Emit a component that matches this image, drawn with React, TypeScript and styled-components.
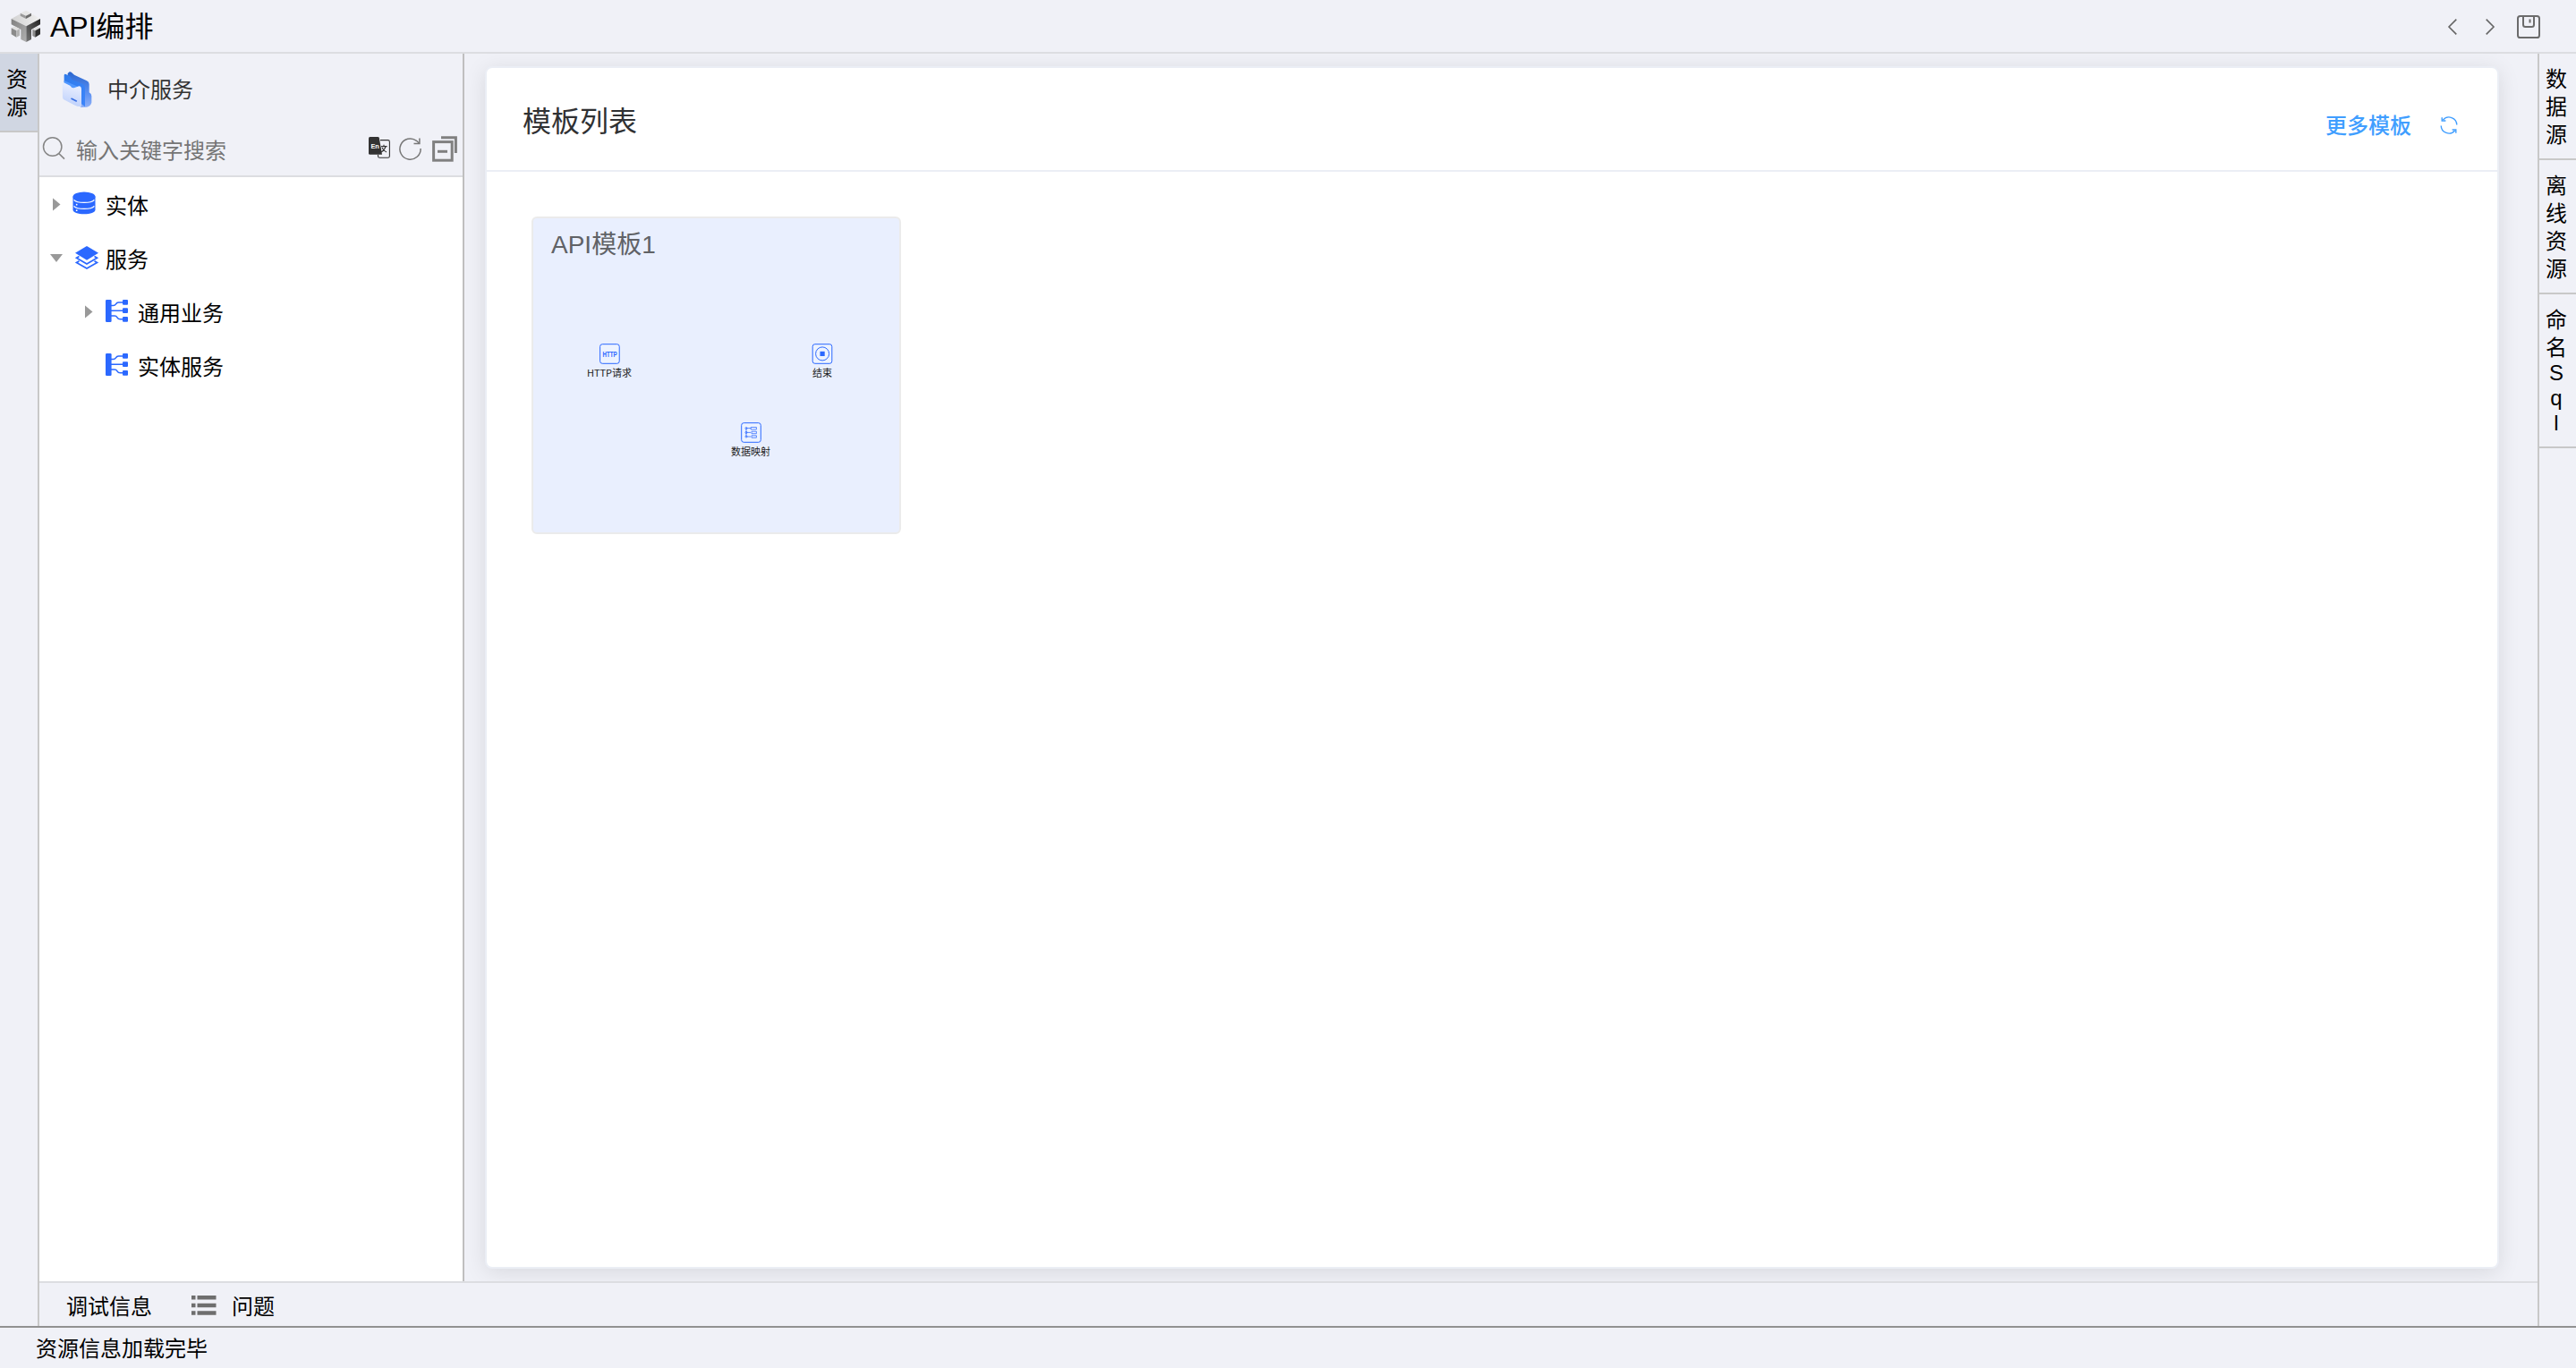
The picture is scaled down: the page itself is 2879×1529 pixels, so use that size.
import type { ReactNode } from "react";
import styled, { createGlobalStyle } from "styled-components";

interface TreeItem {
    label: string;
    level: number;
    state: "closed" | "open" | "leaf";
    icon: ReactNode;
    iconOffset: number;
}

interface FlowNode {
    label: string;
    x: number;
    y: number;
    icon: ReactNode;
}

const LogoIcon = () => (
    <svg width="34" height="37" viewBox="0 0 102 111">
        <defs>
            <linearGradient id="logoTop" x1="0" y1="0" x2="1" y2="0">
                <stop offset="0" stopColor="#d2d2d2" />
                <stop offset="1" stopColor="#f0f0f0" />
            </linearGradient>
            <linearGradient id="logoLeft" x1="0" y1="0" x2="1" y2="1">
                <stop offset="0" stopColor="#808080" />
                <stop offset="1" stopColor="#b0b0b0" />
            </linearGradient>
            <linearGradient id="logoRight" x1="1" y1="0" x2="0" y2="1">
                <stop offset="0" stopColor="#222" />
                <stop offset="1" stopColor="#777" />
            </linearGradient>
        </defs>
        <path d="M5 30 32 15 54 28 77 15 102 30 55 55Z" fill="url(#logoTop)" />
        <path d="M35 11 54 2 72 11 54 20Z" fill="#e6e6e6" />
        <path d="M35 11 54 20V30L35 20Z" fill="#999" />
        <path d="M54 20 72 11V20L54 30Z" fill="#6c6c6c" />
        <path d="M5 30 55 55V108L37 99V66L5 49Z" fill="url(#logoLeft)" />
        <path d="M102 30 55 55V108L72 99V66L102 49Z" fill="url(#logoRight)" />
        <path d="M5 61 16 55 33 64 22 70Z" fill="#e0e0e0" />
        <path d="M5 61 22 70V92L5 82Z" fill="#8b8b8b" />
        <path d="M22 70 33 64V86L22 92Z" fill="#b4b4b4" />
        <path d="M76 65 92 56 102 61 85 70Z" fill="#dedede" />
        <path d="M76 65 85 70V92L76 87Z" fill="#8c8c8c" />
        <path d="M85 70 102 61V82L85 92Z" fill="#2e2e2e" />
    </svg>
);

const FolderIcon = () => (
    <svg width="34" height="40" viewBox="0 0 102 120">
        <defs>
            <linearGradient id="folderBack" x1="0" y1="0" x2="1" y2="1">
                <stop offset="0" stopColor="#2f7bea" />
                <stop offset="1" stopColor="#3c85fb" />
            </linearGradient>
            <linearGradient id="folderSide" x1="0" y1="0" x2="0" y2="1">
                <stop offset="0" stopColor="#2a66cf" />
                <stop offset="0.6" stopColor="#5b90f2" />
                <stop offset="1" stopColor="#8fb0f6" />
            </linearGradient>
            <linearGradient id="folderFront" x1="0.6" y1="0" x2="0.4" y2="1">
                <stop offset="0" stopColor="#eef2ff" />
                <stop offset="1" stopColor="#bccffb" />
            </linearGradient>
        </defs>
        <path d="M20 6 26 1Q30 0 33 3L42 11 84 31Q92 34 92 42V70Q100 74 100 82V104Q97 116 84 119L64 120 20 60Z" fill="url(#folderSide)" />
        <path d="M8 12Q9 7 14 9L28 16 34 27 66 40Q78 44 78 55V118L8 60Z" fill="url(#folderBack)" />
        <path d="M8 30 64 55V70L8 46Z" fill="#4f97ff" />
        <path d="M2 42Q3 35 10 38L28 47Q34 56 41 55L58 49Q66 50 66 60V118Q50 118 40 111L7 94Q3 91 3 86Z" fill="url(#folderFront)" />
        <path d="M33 91 49 99" stroke="#376fe4" strokeWidth="5" strokeLinecap="round" />
    </svg>
);

const SearchIcon = () => (
    <svg width="26" height="26" viewBox="0 0 26 26" fill="none" stroke="#858585" strokeWidth="1.5">
        <circle cx="11.7" cy="11" r="10.2" />
        <path d="M18.6 18.4 25 24.6" />
    </svg>
);

const TranslateIcon = () => (
    <svg width="24" height="24" viewBox="0 0 24 24">
        <path d="M13 3.6H21.5Q23.4 3.6 23.4 5.5V21.5Q23.4 23.3 21.5 23.3H12.5Q10.5 23.3 10.5 21.5V20" fill="none" stroke="#333" strokeWidth="1.1" />
        <path d="M1.5 0H10.4Q11.4 0 11.8 1L15 19.8H1.5Q0 19.8 0 18.3V1.5Q0 0 1.5 0Z" fill="#333" />
        <text x="2.4" y="13" fontSize="7.4" fontWeight="700" fill="#fff">En</text>
        <path d="M14 10.6H20.6M17 8.8V10.6M19 10.8Q18 14.5 14 17M15 12Q16.5 15.5 20 17" fill="none" stroke="#333" strokeWidth="1.1" />
    </svg>
);

const ReloadIcon = () => (
    <svg width="25" height="25" viewBox="0 0 25 25" fill="none" stroke="#777" strokeWidth="1.5">
        <path d="M24.1 12A11.6 11.6 0 1 1 19.5 3.3L22.6 6.2" />
        <path d="M22.9 0.6V6.6H16.5" />
    </svg>
);

const CollapseIcon = () => (
    <svg width="28" height="29" viewBox="0 0 28 29" fill="none" stroke="#808080">
        <path d="M10 1.7H26.4V19" strokeWidth="3" />
        <rect x="1.6" y="6.6" width="20.6" height="20.6" strokeWidth="3" />
        <path d="M6 17.3H17" strokeWidth="3" />
    </svg>
);

const DatabaseIcon = () => (
    <svg width="26" height="26" viewBox="0 0 26 26">
        <path d="M.5 5.5V20.5C.5 23.4 6 25.3 13 25.3S25.5 23.4 25.5 20.5V5.5Z" fill="#2b68ff" />
        <ellipse cx="13" cy="6" rx="12.5" ry="5.6" fill="#2b68ff" />
        <path d="M1.6 9.3C5 13.4 21 13.4 24.4 9.3M1.6 16.3C5 20.4 21 20.4 24.4 16.3" fill="none" stroke="#fff" strokeWidth="1.3" />
        <circle cx="4.7" cy="14.7" r="0.9" fill="#fff" />
        <circle cx="4.7" cy="21.2" r="0.9" fill="#fff" />
    </svg>
);

const LayersIcon = () => (
    <svg width="26" height="28" viewBox="0 -2 26 28" fill="none" stroke="#2b68ff" strokeWidth="1.7">
        <path d="M13 0 26 7.8 13 15.8 0 7.8Z" fill="#2b68ff" stroke="none" />
        <path d="M4.5 11.5 1.5 13.2 13 20 24.5 13.2 21.5 11.5M4.5 16.7 1.5 18.4 13 25 24.5 18.4 21.5 16.7" />
    </svg>
);

const BranchIcon = () => (
    <svg width="25" height="25" viewBox="0 0 25 25" fill="#2b68ff">
        <rect x="0" y="0" width="6.6" height="25" rx="1.2" />
        <rect x="19" y="0" width="6" height="5.8" rx="1" />
        <rect x="19" y="9.2" width="6" height="5.8" rx="1" />
        <rect x="19" y="19" width="6" height="5.8" rx="1" />
        <path d="M6 6.5H8.5Q10.5 6.5 11.5 4.8T14.5 3H20M6 12.2H20M6 18H10Q12 18 13 19.9T16.5 21.8H20" fill="none" stroke="#2b68ff" strokeWidth="1.5" />
    </svg>
);

const ChevronIcon = ({ right }: { right?: boolean }) => (
    <svg width="10" height="18" viewBox="0 0 10 18" fill="none" stroke="#666" strokeWidth="1.6">
        <path d={right ? "M.7.6 9 9 .7 17.4" : "M9.3.6 1 9 9.3 17.4"} />
    </svg>
);

const SaveIcon = () => (
    <svg width="26" height="26" viewBox="0 0 26 26" fill="none" stroke="#6b6b6b" strokeWidth="2">
        <rect x="1" y="1" width="24" height="24" rx="2.6" />
        <path d="M7 1V10.5Q7 13 9.5 13H16.5Q19 13 19 10.5V1M14.5 4.6V8.6" />
    </svg>
);

const SyncIcon = () => (
    <svg width="20" height="20" viewBox="0 0 20 20" fill="none" stroke="#409eff" strokeWidth="1.4">
        <path d="M1.2 10.4A8.8 8.8 0 0 0 16.6 16M18.8 9.6A8.8 8.8 0 0 0 3.4 4" />
        <path d="M2.2 1.2V5H6.4M17.8 18.8V15H13.6" />
    </svg>
);

const ListIcon = () => (
    <svg width="28" height="22" viewBox="0 0 28 22" fill="#6e6e6e">
        <path d="M0 0H4.5V4.5H0ZM0 8.7H4.5V13.2H0ZM0 17.3H4.5V21.8H0ZM6.5 0H27.5V4.5H6.5ZM6.5 8.7H27.5V13.2H6.5ZM6.5 17.3H27.5V21.8H6.5Z" />
    </svg>
);

const NodeFrame = ({ children }: { children: ReactNode }) => (
    <svg width="23" height="23" viewBox="0 0 23 23" fill="none" stroke="#2b68ff" strokeWidth="1">
        <rect x="0.7" y="0.7" width="21.6" height="21.6" rx="2.6" fill="#edf3ff" />
        {children}
    </svg>
);

const HttpNodeIcon = () => (
    <NodeFrame>
        <text x="3.5" y="14.9" fontSize="9.6" fontWeight="700" fill="#2b68ff" stroke="none" textLength="16.2" lengthAdjust="spacingAndGlyphs">
            HTTP
        </text>
    </NodeFrame>
);

const EndNodeIcon = () => (
    <NodeFrame>
        <circle cx="11.6" cy="11.4" r="7.5" />
        <rect x="9" y="8.8" width="5.2" height="5.2" fill="#2b68ff" stroke="none" />
    </NodeFrame>
);

const MappingNodeIcon = () => (
    <NodeFrame>
        <path d="M6 6.6V16M6 6.6H11M6 11.4H11M6 16H11M11.2 5.5H17.4V8H11.2ZM12 10.2H17.4V12.7H12ZM12 14.8H17.4V17.2H12Z" strokeWidth="0.75" />
        <circle cx="6" cy="6.6" r="1.1" strokeWidth="0.7" />
        <circle cx="6" cy="11.4" r="1.1" strokeWidth="0.7" />
        <circle cx="6" cy="16" r="1.1" strokeWidth="0.7" />
    </NodeFrame>
);

const treeItems: TreeItem[] = [
    { label: "实体", level: 0, state: "closed", icon: <DatabaseIcon />, iconOffset: 0 },
    { label: "服务", level: 0, state: "open", icon: <LayersIcon />, iconOffset: 3 },
    { label: "通用业务", level: 1, state: "closed", icon: <BranchIcon />, iconOffset: 1 },
    { label: "实体服务", level: 1, state: "leaf", icon: <BranchIcon />, iconOffset: 1 },
];

const flowNodes: FlowNode[] = [
    { label: "HTTP请求", x: 85, y: 140, icon: <HttpNodeIcon /> },
    { label: "结束", x: 323, y: 140, icon: <EndNodeIcon /> },
    { label: "数据映射", x: 243, y: 228, icon: <MappingNodeIcon /> },
];

const rightTabs = ["数据源", "离线资源", "命名Sql"];

const VerticalText = ({ text }: { text: string }) => (
    <>
        {text.split("").map((char, index) => (
            <TabChar key={index} $latin={char.charCodeAt(0) < 128}>
                {char}
            </TabChar>
        ))}
    </>
);

const App = () => {
    return (
        <Page>
            <GlobalStyle />
            <Header>
                <LogoIcon />
                <AppTitle>API编排</AppTitle>
                <HeaderActions>
                    <ChevronIcon />
                    <ChevronIcon right />
                    <SaveIcon />
                </HeaderActions>
            </Header>
            <Body>
                <LeftTabs>
                    <LeftTab>
                        <VerticalText text="资源" />
                    </LeftTab>
                </LeftTabs>
                <Center>
                    <Workspace>
                        <Sidebar>
                            <SidebarHead>
                                <ServiceRow>
                                    <FolderIcon />
                                    <ServiceName>中介服务</ServiceName>
                                </ServiceRow>
                                <SearchRow>
                                    <SearchIcon />
                                    <SearchInput placeholder="输入关键字搜索" />
                                    <SearchTools>
                                        <TranslateIcon />
                                        <ReloadIcon />
                                        <CollapseIcon />
                                    </SearchTools>
                                </SearchRow>
                            </SidebarHead>
                            <Tree>
                                {treeItems.map((item) => (
                                    <TreeRow key={item.label} $level={item.level}>
                                        <CaretBox>
                                            <Caret $state={item.state} />
                                        </CaretBox>
                                        <TreeIcon $offset={item.iconOffset}>{item.icon}</TreeIcon>
                                        <TreeLabel>{item.label}</TreeLabel>
                                    </TreeRow>
                                ))}
                            </Tree>
                        </Sidebar>
                        <Main>
                            <Card>
                                <CardHead>
                                    <CardTitle>模板列表</CardTitle>
                                    <CardActions>
                                        <MoreLink>更多模板</MoreLink>
                                        <SyncIcon />
                                    </CardActions>
                                </CardHead>
                                <CardBody>
                                    <Template>
                                        <TemplateTitle>API模板1</TemplateTitle>
                                        {flowNodes.map((node) => (
                                            <Node key={node.label} $x={node.x} $y={node.y}>
                                                {node.icon}
                                                <NodeLabel>{node.label}</NodeLabel>
                                            </Node>
                                        ))}
                                    </Template>
                                </CardBody>
                            </Card>
                        </Main>
                    </Workspace>
                    <BottomTabs>
                        <BottomTab>
                            <BottomLabel>调试信息</BottomLabel>
                        </BottomTab>
                        <BottomTab>
                            <ListIcon />
                            <BottomLabel>问题</BottomLabel>
                        </BottomTab>
                    </BottomTabs>
                </Center>
                <RightTabs>
                    {rightTabs.map((tab) => (
                        <RightTab key={tab}>
                            <VerticalText text={tab} />
                        </RightTab>
                    ))}
                </RightTabs>
            </Body>
            <StatusBar>资源信息加载完毕</StatusBar>
        </Page>
    );
};

export default App;

const GlobalStyle = createGlobalStyle`
    * {
        box-sizing: border-box;
    }
    body {
        margin: 0;
        overflow: hidden;
        color: #000;
        font-family: "Liberation Sans", "Noto Sans CJK SC", sans-serif;
        font-size: 24px;
    }
    svg {
        display: block;
        flex-shrink: 0;
        overflow: visible;
    }
`;

const Page = styled.div`
    display: flex;
    flex-direction: column;
    height: 100vh;
    background-color: #f0f1f7;
`;

const Header = styled.header`
    display: flex;
    align-items: center;
    height: 60px;
    padding: 0 40px 0 11px;
    border-bottom: 2px solid #dcdde1;
`;

const AppTitle = styled.div`
    margin-left: 11px;
    padding-top: 3px;
    font-size: 32px;
    line-height: 55px;
`;

const HeaderActions = styled.div`
    display: flex;
    align-items: center;
    margin-left: auto;
    padding-top: 2px;
    gap: 32px;

    svg:last-child {
        margin-left: -7px;
    }
`;

const Body = styled.div`
    display: flex;
    flex: 1;
    min-height: 0;
`;

const LeftTabs = styled.div`
    width: 44px;
    border-right: 2px solid #c8c8c8;
`;

const LeftTab = styled.div`
    padding: 13px 4px 11px 0;
    background-color: #d0d6e2;
    border-bottom: 2px solid #c8c8c8;
`;

const TabChar = styled.div<{ $latin: boolean }>`
    height: ${({ $latin }) => ($latin ? 28 : 31)}px;
    line-height: ${({ $latin }) => ($latin ? 26 : 31)}px;
    text-align: center;
`;

const Center = styled.div`
    display: flex;
    flex-direction: column;
    flex: 1;
    min-width: 0;
`;

const Workspace = styled.div`
    display: flex;
    flex: 1;
    min-height: 0;
`;

const Sidebar = styled.aside`
    width: 475px;
    background-color: #fff;
    border-right: 2px solid #bfbfbf;
`;

const SidebarHead = styled.div`
    height: 138px;
    background-color: #f0f1f7;
    border-bottom: 2px solid #dcdde1;
`;

const ServiceRow = styled.div`
    display: flex;
    align-items: center;
    height: 80px;
    padding-left: 25px;
`;

const ServiceName = styled.div`
    margin-left: 17px;
    padding-bottom: 3px;
    color: #333;
`;

const SearchRow = styled.div`
    display: flex;
    align-items: center;
    height: 56px;
    padding: 0 6px 4px 3px;
`;

const SearchInput = styled.input`
    flex: 1;
    min-width: 0;
    height: 40px;
    margin-left: 12px;
    padding: 5px 0 0;
    border: none;
    outline: none;
    background: transparent;
    font-family: inherit;
    font-size: 24px;

    &::placeholder {
        color: #757575;
    }
`;

const SearchTools = styled.div`
    display: flex;
    align-items: center;
    gap: 11px;

    svg:first-child {
        margin: 0 -1px 2px 0;
    }

    svg:last-child {
        margin-left: 1px;
    }
`;

const Tree = styled.div`
    padding-top: 2px;
`;

const TreeRow = styled.div<{ $level: number }>`
    display: flex;
    align-items: center;
    height: 60px;
    padding-left: ${({ $level }) => 10 + $level * 36}px;
`;

const CaretBox = styled.div`
    display: flex;
    justify-content: center;
    width: 18px;
    margin: 0 9px 3px 0;
`;

const Caret = styled.div<{ $state: TreeItem["state"] }>`
    width: ${({ $state }) => ($state === "open" ? 14 : 9)}px;
    height: ${({ $state }) => ($state === "open" ? 9 : 15)}px;
    visibility: ${({ $state }) => ($state === "leaf" ? "hidden" : "visible")};
    background-color: #999;
    clip-path: ${({ $state }) => ($state === "open" ? "polygon(0 0, 100% 0, 50% 100%)" : "polygon(0 0, 100% 50%, 0 100%)")};
`;

const TreeIcon = styled.div<{ $offset: number }>`
    width: 37px;
    padding: 0 0 6px ${({ $offset }) => $offset}px;
`;

const TreeLabel = styled.div`
    padding-top: 1px;
    line-height: 59px;
`;

const Main = styled.main`
    flex: 1;
    min-width: 0;
    padding: 14px 43px 14px 23px;
    overflow: hidden;
`;

const Card = styled.section`
    height: 100%;
    background-color: #fff;
    border: 2px solid #ebeef5;
    border-radius: 8px;
    box-shadow: 0 4px 24px rgba(0, 0, 0, 0.1);
`;

const CardHead = styled.div`
    display: flex;
    justify-content: space-between;
    align-items: center;
    height: 116px;
    padding: 0 44px 0 40px;
    border-bottom: 2px solid #ebeef5;
`;

const CardTitle = styled.div`
    color: #303133;
    font-size: 32px;
`;

const CardActions = styled.div`
    display: flex;
    align-items: center;
    gap: 32px;
    padding-top: 14px;
`;

const MoreLink = styled.a`
    padding-bottom: 3px;
    color: #409eff;
    font-weight: 500;
`;

const CardBody = styled.div`
    padding: 50px;
`;

const Template = styled.div`
    position: relative;
    width: 413px;
    height: 355px;
    padding: 9px 20px;
    background-color: #e9effe;
    border: 2px solid #ebebeb;
    border-radius: 6px;
`;

const TemplateTitle = styled.div`
    color: #606266;
    font-size: 28px;
    line-height: 42px;
`;

/* nodes sit on a free canvas, x is the horizontal centre */
const Node = styled.div<{ $x: number; $y: number }>`
    position: absolute;
    left: ${({ $x }) => $x}px;
    top: ${({ $y }) => $y}px;
    display: flex;
    flex-direction: column;
    align-items: center;
    transform: translateX(-50%);
`;

const NodeLabel = styled.div`
    margin-top: 1px;
    color: #222;
    font-family: "Noto Sans CJK SC", sans-serif;
    font-size: 11px;
    line-height: 16px;
    white-space: nowrap;
`;

const BottomTabs = styled.div`
    display: flex;
    align-items: center;
    height: 50px;
    padding: 2px 0 0 30px;
    gap: 44px;
    border-top: 2px solid #dcdde1;
`;

const BottomTab = styled.div`
    display: flex;
    align-items: center;
    gap: 17px;
`;

const BottomLabel = styled.span`
    padding-bottom: 2px;
`;

const RightTabs = styled.div`
    width: 43px;
    border-left: 2px solid #c8c8c8;
`;

const RightTab = styled.div`
    padding: 13px 3px 11px 0;
    border-bottom: 2px solid #c8c8c8;
`;

const StatusBar = styled.footer`
    height: 47px;
    padding: 1px 0 0 40px;
    border-top: 2px solid #919191;
    line-height: 46px;
`;
